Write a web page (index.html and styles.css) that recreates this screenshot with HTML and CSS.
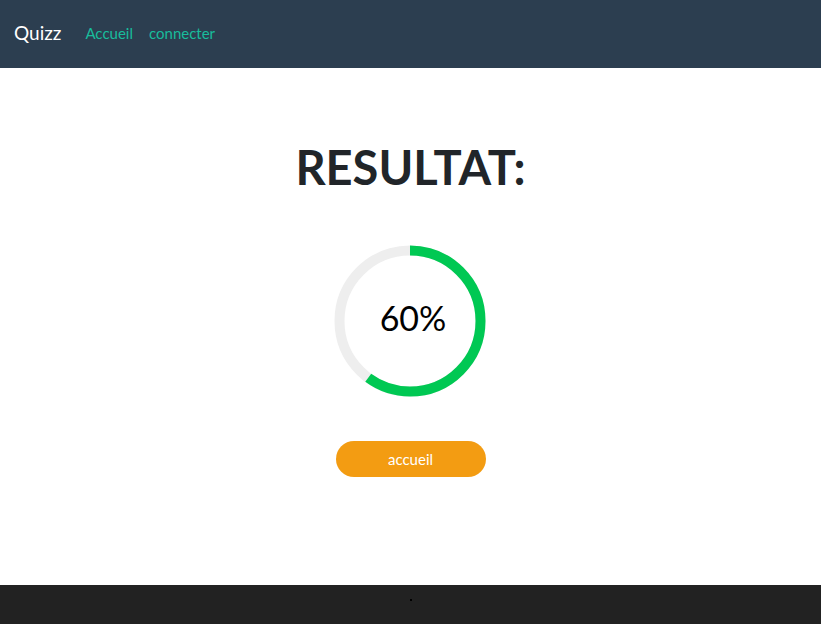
FILE: index.html
```html
<!DOCTYPE html>
<html lang="fr">
<head>
<meta charset="utf-8">
<title>Quizz</title>
<link rel="stylesheet" href="styles.css">
</head>
<body>
<nav class="navbar">
  <a class="brand" href="#">Quizz</a>
  <a class="nav-link" href="#">Accueil</a>
  <a class="nav-link" href="#">connecter</a>
</nav>
<main class="content">
  <h1 class="title">RESULTAT:</h1>
  <div class="progress">
    <svg class="ring" width="152" height="152" viewBox="0 0 152 152">
      <circle cx="76" cy="76" r="70.5" fill="none" stroke="#eeeeee" stroke-width="10"/>
      <circle cx="76" cy="76" r="70.5" fill="none" stroke="#00c853" stroke-width="10"
        stroke-dasharray="265.78 443" transform="rotate(-90 76 76)"/>
    </svg>
    <span class="percent">60%</span>
  </div>
  <a class="btn" href="#">accueil</a>
</main>
<footer class="footer"><span class="dot"></span></footer>
</body>
</html>
```
FILE: styles.css
```css
html, body {
  margin: 0;
  padding: 0;
}
body {
  font-family: Lato, "Open Sans", sans-serif;
  background: #fff;
  color: #212529;
  width: 821px;
  height: 624px;
  display: flex;
  flex-direction: column;
  overflow: hidden;
}
.navbar {
  background: #2c3e50;
  height: 68px;
  display: flex;
  align-items: center;
  padding: 0 14px 2px;
  box-sizing: border-box;
  flex-shrink: 0;
}
.brand {
  color: #fff;
  font-size: 19px;
  text-decoration: none;
  margin-right: 24px;
  margin-top: -1px;
}
.nav-link {
  color: #18bc9c;
  font-size: 15px;
  text-decoration: none;
  margin-right: 16px;
}
.content {
  flex: 1;
  display: flex;
  flex-direction: column;
  align-items: center;
}
.title {
  margin: 69px 0 0;
  font-size: 47px;
  font-weight: 700;
  line-height: 60px;
  color: #212529;
}
.progress {
  position: relative;
  width: 152px;
  height: 152px;
  margin-top: 48px;
  margin-left: -1px;
}
.ring {
  display: block;
}
.percent {
  position: absolute;
  inset: 0;
  display: flex;
  align-items: center;
  justify-content: center;
  font-size: 34px;
  font-weight: 400;
  color: #000;
  padding-bottom: 8px;
  padding-left: 6px;
  box-sizing: border-box;
}
.btn {
  margin-top: 44px;
  width: 150px;
  height: 36px;
  border-radius: 18px;
  background: #f39c12;
  color: #fff;
  text-decoration: none;
  font-size: 15px;
  display: flex;
  align-items: center;
  justify-content: center;
}
.footer {
  background: #222222;
  height: 39px;
  flex-shrink: 0;
  display: flex;
  justify-content: center;
  padding-top: 14px;
  box-sizing: border-box;
}
.dot {
  width: 2px;
  height: 2px;
  background: #000;
}
```
